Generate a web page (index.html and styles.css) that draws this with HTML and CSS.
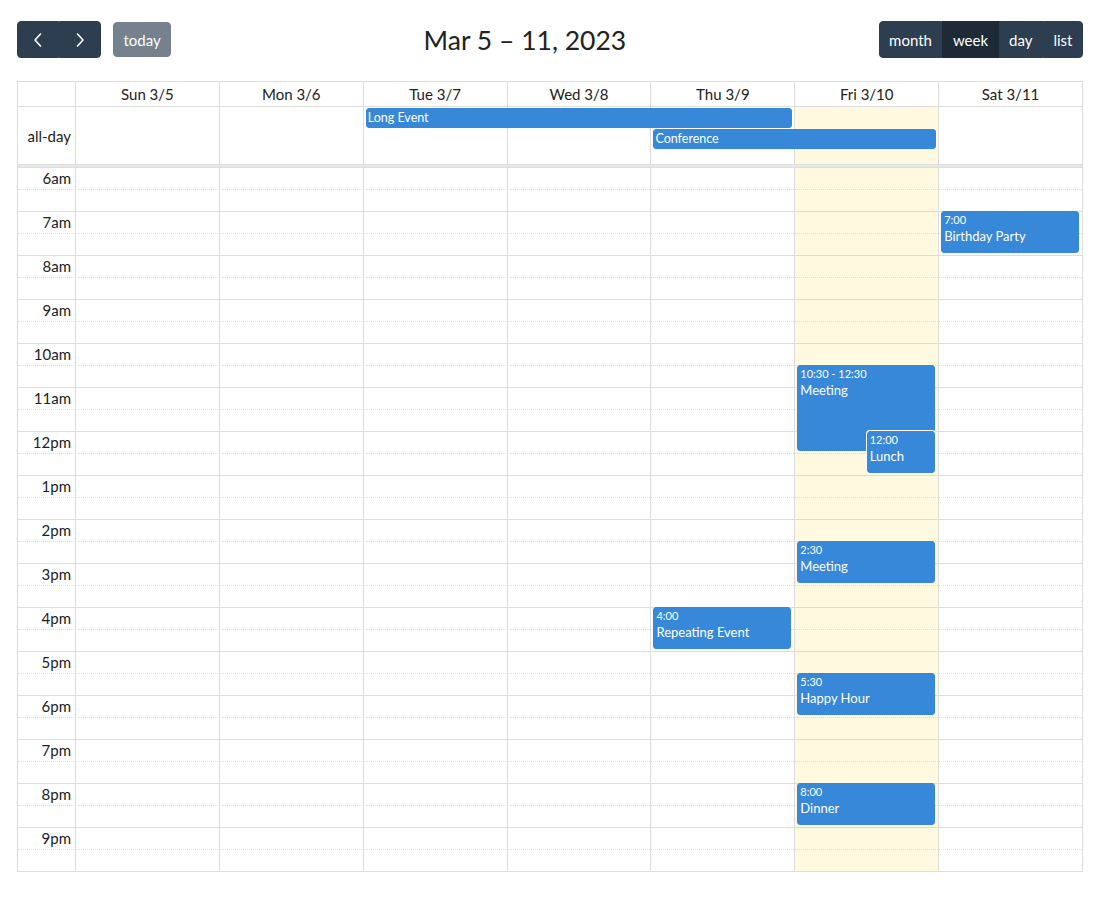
FILE: index.html
```html
<!DOCTYPE html>
<html lang="en">
<head>
  <meta charset="UTF-8" />
  <title>Week Calendar</title>
  <meta name="viewport" content="width=device-width, initial-scale=1" />
  <link rel="stylesheet" href="styles.css">
</head>
<body>

  <!-- TOOLBAR -->
  <div class="toolbar">
    <div class="toolbar-chunk">
      <div class="btn-group">
        <button class="btn btn-arrow" aria-label="prev">
          <svg width="10" height="16" viewBox="0 0 10 16"><path d="M7.5 2 L2 8 L7.5 14" fill="none" stroke="#fff" stroke-width="1.6" stroke-linecap="round" stroke-linejoin="round"/></svg>
        </button>
        <button class="btn btn-arrow" aria-label="next">
          <svg width="10" height="16" viewBox="0 0 10 16"><path d="M2.5 2 L8 8 L2.5 14" fill="none" stroke="#fff" stroke-width="1.6" stroke-linecap="round" stroke-linejoin="round"/></svg>
        </button>
      </div>
      <button class="btn btn-today">today</button>
    </div>
    <h2 class="title">Mar 5 – 11, 2023</h2>
    <div class="btn-group">
      <button class="btn">month</button>
      <button class="btn active">week</button>
      <button class="btn">day</button>
      <button class="btn">list</button>
    </div>
  </div>

  <!-- CALENDAR -->
  <div class="cal">

    <div class="head-row">
      <div class="axis"></div>
      <div class="day-head">Sun 3/5</div>
      <div class="day-head">Mon 3/6</div>
      <div class="day-head">Tue 3/7</div>
      <div class="day-head">Wed 3/8</div>
      <div class="day-head">Thu 3/9</div>
      <div class="day-head">Fri 3/10</div>
      <div class="day-head">Sat 3/11</div>
    </div>

    <div class="allday">
      <div class="allday-bg">
        <div class="axis allday-label">all-day</div>
        <div class="ad-cell"></div>
        <div class="ad-cell"></div>
        <div class="ad-cell"></div>
        <div class="ad-cell"></div>
        <div class="ad-cell"></div>
        <div class="ad-cell today"></div>
        <div class="ad-cell"></div>
      </div>
      <div class="allday-events">
        <div class="ad-event" style="grid-column: 4 / 7; grid-row: 1;">Long Event</div>
        <div class="ad-event" style="grid-column: 6 / 8; grid-row: 2;">Conference</div>
      </div>
    </div>

    <div class="divider"></div>

    <div class="body">
      <div class="slots" id="slots"></div>

      <div class="cols">
        <div class="col-axis"></div>
        <div class="col"></div>
        <div class="col"></div>
        <div class="col"></div>
        <div class="col"></div>
        <div class="col">
          <div class="event" style="top: 440px; height: 42px;">
            <div class="ev-time">4:00</div>
            <div class="ev-title">Repeating Event</div>
          </div>
        </div>
        <div class="col today">
          <div class="event" style="top: 198px; height: 86px;">
            <div class="ev-time">10:30 - 12:30</div>
            <div class="ev-title">Meeting</div>
          </div>
          <div class="event lunch" style="top: 264px; height: 42px;">
            <div class="ev-time">12:00</div>
            <div class="ev-title">Lunch</div>
          </div>
          <div class="event" style="top: 374px; height: 42px;">
            <div class="ev-time">2:30</div>
            <div class="ev-title">Meeting</div>
          </div>
          <div class="event" style="top: 506px; height: 42px;">
            <div class="ev-time">5:30</div>
            <div class="ev-title">Happy Hour</div>
          </div>
          <div class="event" style="top: 616px; height: 42px;">
            <div class="ev-time">8:00</div>
            <div class="ev-title">Dinner</div>
          </div>
        </div>
        <div class="col">
          <div class="event" style="top: 44px; height: 42px;">
            <div class="ev-time">7:00</div>
            <div class="ev-title">Birthday Party</div>
          </div>
        </div>
      </div>
    </div>

  </div>

  <script>
    // build the half-hour slot rows, 6am to 10pm
    const slots = document.getElementById('slots');
    for (let h = 6; h < 22; h++) {
      const label = (h % 12 === 0 ? 12 : h % 12) + (h < 12 ? 'am' : 'pm');
      slots.insertAdjacentHTML('beforeend',
        `<div class="slot"><div class="slot-label">${label}</div><div></div></div>` +
        `<div class="slot half"><div class="slot-label"></div><div></div></div>`);
    }
  </script>

</body>
</html>
```

FILE: styles.css
```css
body {
  margin: 0;
  padding: 21px 17px 0 17px;
  font-family: Lato, "Noto Sans", sans-serif;
  font-size: 15px;
  color: #222;
  background: #fff;
}

/* toolbar */
.toolbar {
  display: flex;
  justify-content: space-between;
  align-items: center;
  margin-bottom: 23px;
}

.toolbar-chunk {
  display: flex;
  align-items: center;
}

.title {
  margin: 0;
  font-size: 26.5px;
  font-weight: 400;
  color: #222;
}

.btn-group {
  display: flex;
}

.btn {
  font-family: inherit;
  font-size: 15px;
  color: #fff;
  background-color: #2c3e50;
  border: 1px solid #2c3e50;
  padding: 0 9.5px;
  height: 37px;
  border-radius: 0;
  cursor: pointer;
  display: flex;
  align-items: center;
}

.btn-group .btn:first-child {
  border-radius: 4px 0 0 4px;
}

.btn-group .btn:last-child {
  border-radius: 0 4px 4px 0;
}

.btn-arrow {
  width: 42px;
  justify-content: center;
}

.btn.active {
  background-color: #1e2b37;
  border-color: #1e2b37;
}

.btn-today {
  margin-left: 12px;
  height: 35px;
  border-radius: 4px;
  opacity: 0.65;
  cursor: default;
}

/* grid */
.cal {
  border: 1px solid #ddd;
}

.head-row,
.allday-bg,
.allday-events,
.slot,
.cols {
  display: grid;
  grid-template-columns: 57px repeat(7, 1fr);
}

.head-row {
  height: 24px;
  border-bottom: 1px solid #ddd;
}

.day-head {
  border-left: 1px solid #ddd;
  text-align: center;
  line-height: 24px;
}

.allday {
  position: relative;
  height: 57px;
  border-bottom: 1px solid #ddd;
}

.allday-bg {
  height: 100%;
}

.allday-label {
  display: flex;
  align-items: center;
  justify-content: flex-end;
  padding-right: 4px;
}

.ad-cell {
  border-left: 1px solid #ddd;
}

.today {
  background-color: rgba(255, 220, 40, 0.15);
}

.allday-events {
  position: absolute;
  top: 1px;
  left: 0;
  right: 0;
  grid-auto-rows: 21px;
}

.ad-event {
  margin: 0 2px 1px 3px;
  background-color: #3788d8;
  border: 1px solid #3788d8;
  border-radius: 3px;
  color: #fff;
  font-size: 12.5px;
  line-height: 18px;
  padding-left: 1px;
  overflow: hidden;
  white-space: nowrap;
}

.divider {
  height: 2px;
  background-color: #e8e8e8;
}

/* time grid */
.body {
  position: relative;
}

.slot {
  height: 21px;
  border-top: 1px solid #ddd;
}

.slot.half {
  border-top-style: dotted;
}

.slot-label {
  text-align: right;
  padding-right: 4px;
  line-height: 21px;
}

.cols {
  position: absolute;
  top: 0;
  bottom: 0;
  left: 0;
  right: 0;
}

.col {
  position: relative;
  border-left: 1px solid #ddd;
}

.event {
  position: absolute;
  left: 2px;
  right: 3px;
  box-sizing: border-box;
  background-color: #3788d8;
  border: 1px solid #3788d8;
  border-radius: 3px;
  color: #fff;
  padding: 1px 2px;
  overflow: hidden;
}

.event.lunch {
  left: 50%;
  box-shadow: 0 0 0 1px #fff;
}

.ev-time {
  font-size: 11px;
  line-height: 14px;
}

.ev-title {
  font-size: 13px;
  line-height: 19px;
}
```
